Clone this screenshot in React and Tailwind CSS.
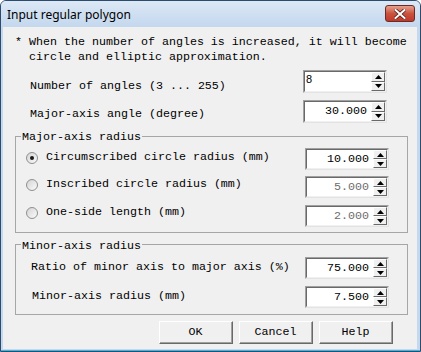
import React from 'react';

const monoBase = "font-['Liberation_Mono','Courier_New',monospace] text-[11.67px] leading-[15px]";
const mono = `${monoBase} text-black`;

function Arrow({ up }) {
  return (
    <svg width="7" height="4" viewBox="0 0 7 4" className="block">
      {up ? <path d="M3.5 0 L7 4 L0 4 Z" fill="#000" /> : <path d="M0 0 L7 0 L3.5 4 Z" fill="#000" />}
    </svg>
  );
}

function SpinHalf({ up }) {
  return (
    <div className="flex-1 flex items-center justify-center bg-[#f0f0f0] border-t border-l border-t-white border-l-white border-b border-r border-b-[#696969] border-r-[#696969]">
      <Arrow up={up} />
    </div>
  );
}

function SpinBox({ value, disabled, left, h = 'h-[23px]' }) {
  return (
    <div className={`flex w-[84px] ${h} border border-t-[#a0a0a0] border-l-[#a0a0a0] border-b-[#e3e3e3] border-r-[#e3e3e3]`}>
      <div className="flex flex-1 bg-white border border-t-[#696969] border-l-[#696969] border-b-[#f0f0f0] border-r-[#f0f0f0]">
        {left ? (
          <div className="flex-1 pl-[1px] pt-[1px] font-['Liberation_Sans',Arial,sans-serif] text-[11px] leading-[13px] text-black">
            {value}
          </div>
        ) : (
          <div className={`flex-1 flex items-center justify-end pr-[4px] ${monoBase} ${disabled ? 'text-[#6d6d6d]' : 'text-black'}`}>
            {value}
          </div>
        )}
        <div className="flex flex-col w-[14px]">
          <SpinHalf up />
          <SpinHalf />
        </div>
      </div>
    </div>
  );
}

function Radio({ checked }) {
  return (
    <div className="w-[12px] h-[12px] rounded-full border border-[#8e8f8f] bg-gradient-to-br from-[#d4d4d4] to-[#fbfbfb] flex items-center justify-center">
      {checked && <div className="w-[4px] h-[4px] rounded-full bg-[#1a1a1a]" />}
    </div>
  );
}

function Group({ title, height, labelTop, children }) {
  return (
    <div className={`relative ml-[12px] w-[393px] ${height} border border-[#a6a6a6]`}>
      <span className={`absolute left-[5px] ${labelTop} px-[1px] bg-[#f0f0f0] ${mono}`}>{title}</span>
      {children}
    </div>
  );
}

function Button({ children }) {
  return (
    <div className="w-[74px] h-[23px] border border-t-white border-l-white border-b-[#696969] border-r-[#696969] bg-[#f0f0f0]">
      <div className={`h-full flex items-center justify-center border-b border-r border-b-[#a0a0a0] border-r-[#a0a0a0] ${mono}`}>
        {children}
      </div>
    </div>
  );
}

export default function App() {
  return (
    <div className="w-[421px] h-[352px] flex flex-col bg-[#c4d8ee] border border-[#2d4b6c] rounded-t-[6px] overflow-hidden">
      <div className="h-[26px] shrink-0 flex items-center justify-between pl-[6px] pr-[5px] bg-gradient-to-b from-[#dce8f5] to-[#c3d7ee]">
        <span className="font-['Noto_Sans',sans-serif] text-[12px] text-black leading-[16px] mt-[1px]">Input regular polygon</span>
        <div className="w-[30px] h-[17px] mt-[-1px] rounded-[3px] border border-[#6a2b24] bg-gradient-to-b from-[#e7a08f] via-[#c9533f] to-[#c0382a] flex items-center justify-center">
          <svg width="12" height="10" viewBox="0 0 12 10">
            <path d="M1.5 1 L10.5 9 M10.5 1 L1.5 9" stroke="#5a2018" strokeWidth="3.6" strokeLinecap="square" />
            <path d="M1.5 1 L10.5 9 M10.5 1 L1.5 9" stroke="#ffffff" strokeWidth="2" strokeLinecap="square" />
          </svg>
        </div>
      </div>
      <div className="flex-1 ml-[2px] mr-[3px] mb-[2px] bg-[#f0f0f0] flex flex-col">
        <div className={`mt-[8px] ml-[12px] flex ${mono}`}>
          <span className="w-[14px] shrink-0">*</span>
          <span>
            When the number of angles is increased, it will become
            <br />
            circle and elliptic approximation.
          </span>
        </div>

        <div className="mt-[5px] flex">
          <div className={`w-[300px] pl-[27px] pt-[9px] ${mono}`}>Number of angles (3 ... 255)</div>
          <SpinBox value="8" left />
        </div>
        <div className="mt-[6px] flex">
          <div className={`w-[300px] pl-[27px] pt-[7px] ${mono}`}>Major-axis angle (degree)</div>
          <SpinBox value="30.000" />
        </div>

        <div className="mt-[13px]">
          <Group title="Major-axis radius" height="h-[97px]" labelTop="top-[-7px]">
            <div className="mt-[11px] flex">
              <div className={`w-[289px] pl-[10px] pt-[2px] flex items-center gap-[8px] h-[17px] ${mono}`}>
                <Radio checked />
                <span>Circumscribed circle radius (mm)</span>
              </div>
              <SpinBox value="10.000" h="h-[22px]" />
            </div>
            <div className="mt-[6px] flex">
              <div className={`w-[289px] pl-[10px] pt-[1px] flex items-center gap-[8px] h-[16px] ${mono}`}>
                <Radio />
                <span>Inscribed circle radius (mm)</span>
              </div>
              <SpinBox value="5.000" disabled h="h-[22px]" />
            </div>
            <div className="mt-[7px] flex">
              <div className={`w-[289px] pl-[10px] flex items-center gap-[8px] h-[15px] ${mono}`}>
                <Radio />
                <span>One-side length (mm)</span>
              </div>
              <SpinBox value="2.000" disabled h="h-[22px]" />
            </div>
          </Group>
        </div>

        <div className="mt-[11px]">
          <Group title="Minor-axis radius" height="h-[71px]" labelTop="top-[-6px]">
            <div className="mt-[12px] flex">
              <div className={`w-[289px] pl-[15px] pt-[3px] ${mono}`}>Ratio of minor axis to major axis (%)</div>
              <SpinBox value="75.000" h="h-[22px]" />
            </div>
            <div className="mt-[7px] flex">
              <div className={`w-[289px] pl-[16px] pt-[3px] ${mono}`}>Minor-axis radius (mm)</div>
              <SpinBox value="7.500" h="h-[22px]" />
            </div>
          </Group>
        </div>

        <div className="mt-[6px] pl-[156px] flex gap-[6px]">
          <Button>OK</Button>
          <Button>Cancel</Button>
          <Button>Help</Button>
        </div>
      </div>
      <div className="h-[1px] bg-[#3cb8e0] -mt-[1px]" />
    </div>
  );
}
